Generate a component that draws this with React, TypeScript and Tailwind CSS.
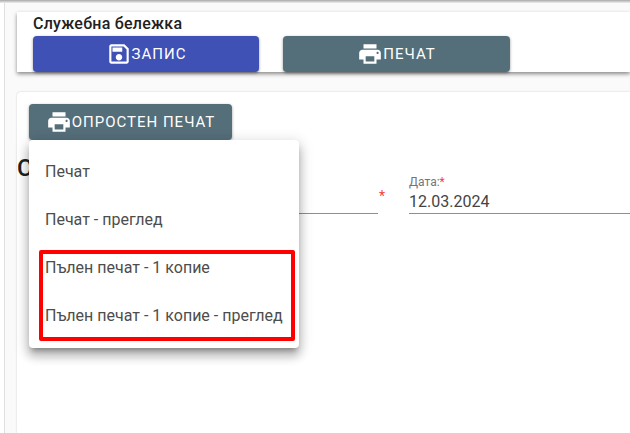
import * as React from 'react';

const PrintIcon = ({ size = 26 }: { size?: number }) => (
    <svg width={size} height={size} viewBox="0 0 24 24" fill="currentColor" className="shrink-0">
        <path d="M19 8H5c-1.66 0-3 1.34-3 3v6h4v4h12v-4h4v-6c0-1.66-1.34-3-3-3zm-3 11H8v-5h8v5zm3-7c-.55 0-1-.45-1-1s.45-1 1-1 1 .45 1 1-.45 1-1 1zm-1-9H6v4h12V3z" />
    </svg>
);

const SaveIcon = ({ size = 26 }: { size?: number }) => (
    <svg width={size} height={size} viewBox="0 0 24 24" fill="currentColor" className="shrink-0">
        <path d="M17 3H5c-1.11 0-2 .9-2 2v14c0 1.1.89 2 2 2h14c1.1 0 2-.9 2-2V7l-4-4zm2 16H5V5h11.17L19 7.83V19zm-7-7c-1.66 0-3 1.34-3 3s1.34 3 3 3 3-1.34 3-3-1.34-3-3-3zM6 6h9v4H6z" />
    </svg>
);

const menuItems = ['Печат', 'Печат - преглед', 'Пълен печат - 1 копие', 'Пълен печат - 1 копие - преглед'];

export default function App() {
    return (
        <div className="relative h-[433px] w-[630px] overflow-hidden bg-white font-['Roboto',sans-serif]">
            <div className="h-[3px] bg-gradient-to-b from-[#a8a8a8] to-[#f0f0f0]" />
            <div className="ml-[4px] h-[430px] border-l border-[#e0e0e0] bg-[#fafafa] pl-[12px] pt-[9px]">
                <div className="h-[60px] bg-white pl-[16px] shadow-[0_2px_4px_rgba(0,0,0,0.45)]">
                    <div className="h-[24px] text-[16px] font-medium leading-[24px] tracking-[0.25px] text-[#212121]">Служебна бележка</div>
                    <div className="flex gap-[24px]">
                        <button className="flex h-[36px] w-[226px] items-center justify-center rounded-[4px] bg-[#3f51b5] text-[15px] uppercase tracking-[1px] text-white shadow-[0_1px_3px_rgba(0,0,0,0.4)]">
                            <SaveIcon />
                            Запис
                        </button>
                        <button className="flex h-[36px] w-[227px] items-center justify-center rounded-[4px] bg-[#546e7a] text-[15px] uppercase tracking-[1px] text-white shadow-[0_1px_3px_rgba(0,0,0,0.4)]">
                            <PrintIcon />
                            Печат
                        </button>
                    </div>
                </div>
                <div className="mt-[20px] h-[341px] rounded-tl-[4px] bg-white pl-[12px] pt-[12px] shadow-[0_0_2px_rgba(0,0,0,0.2)]">
                    <button className="flex h-[36px] w-[203px] items-center justify-center rounded-[4px] bg-[#546e7a] text-[15px] uppercase tracking-[1px] text-white shadow-[0_1px_3px_rgba(0,0,0,0.4)]">
                        <PrintIcon />
                        Опростен печат
                    </button>
                    <div className="-ml-[12px] mt-[14px] flex">
                        <div className="w-[282px] text-[24px] font-medium leading-[28px] text-[#212121]">С</div>
                        <div className="mt-[29px] flex flex-1">
                            <div className="h-[31px] w-[79px] border-b border-[#8f8f8f]" />
                            <span className="ml-[1px] mt-[6px] w-[30px] text-[14px] leading-[14px] text-[#f44336]">*</span>
                            <div className="flex-1 border-b border-[#8f8f8f]">
                                <div className="-mt-[8px] text-[12px] leading-[14px] text-[#757575]">
                                    Дата:<span className="text-[#f44336]">*</span>
                                </div>
                                <div className="mt-[3px] text-[16px] leading-[20px] text-[#444444]">12.03.2024</div>
                            </div>
                        </div>
                    </div>
                </div>
            </div>

            <div className="absolute left-[29px] top-[140px] h-[208px] w-[270px] rounded-[4px] bg-white py-[8px] shadow-[0_5px_5px_-3px_rgba(0,0,0,0.3),0_8px_10px_1px_rgba(0,0,0,0.2),0_3px_14px_2px_rgba(0,0,0,0.14)]">
                {menuItems.map((item) => (
                    <div key={item} className="flex h-[48px] items-center whitespace-nowrap px-[16px] text-[16px] text-[#4d4d4d]">
                        {item}
                    </div>
                ))}
                <div className="absolute left-[10px] top-[110px] h-[91px] w-[256px] rounded-[2px] border-[4px] border-[#ff0000]" />
            </div>
        </div>
    );
}
